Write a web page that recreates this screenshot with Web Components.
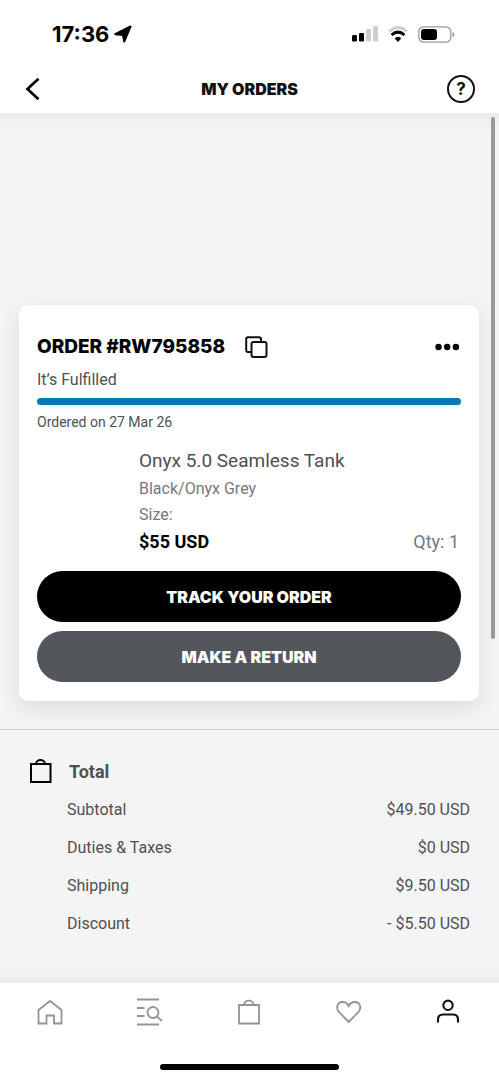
<!DOCTYPE html>
<html lang="en">
<head>
<meta charset="utf-8">
<meta name="viewport" content="width=device-width, initial-scale=1">
<title>My Orders</title>
<style>
  body { margin: 0; background: #fff; font-family: Roboto, "Liberation Sans", sans-serif; font-size: 16px; color: #4f5054; --display: Inter, "Liberation Sans", sans-serif; }
</style>
</head>
<body>
<orders-app></orders-app>
<script>
const define = (name, html) => {
  const template = document.createElement('template');
  template.innerHTML = html;
  customElements.define(name, class extends HTMLElement {
    constructor() {
      super();
      this.attachShadow({ mode: 'open' }).append(template.content.cloneNode(true));
    }
  });
};

define('status-bar', `
<style>
  :host { display: flex; justify-content: space-between; align-items: center; height: 64px; padding: 4px 44px 0 52px; box-sizing: border-box; color: #000; }
  .side { display: flex; align-items: center; }
  time { font: 700 22px/24px var(--display); }
  svg { display: block; }
  .left { gap: 5px; }
  .right { gap: 10px; }
</style>
<div class="side left">
  <time>17:36</time>
  <svg width="18" height="18" viewBox="0 0 18 18" aria-hidden="true"><path d="M16.500 1.500 10.200 16.500 9 10 1.200 9.200Z" fill="#000" stroke="#000" stroke-width="2" stroke-linejoin="round"/></svg>
</div>
<div class="side right">
  <svg width="26" height="16" viewBox="0 0 26 16" aria-hidden="true"><rect x="0" y="9" width="5" height="6.500" rx="1.200"/><rect x="7" y="7" width="5" height="8.500" rx="1.200"/><rect x="14" y="3" width="5" height="12.500" rx="1.200" fill="#cfcfcf"/><rect x="21" y="0" width="5" height="15.500" rx="1.200" fill="#cfcfcf"/></svg>
  <svg width="20" height="16" viewBox="0 0 20 16" fill="none" aria-hidden="true"><path d="M1 5.500Q10-2.500 19 5.500" stroke="#cfcfcf" stroke-width="3"/><path d="M3.600 9Q10 3.200 16.400 9" stroke="#000" stroke-width="3"/><path d="M6.600 12.300Q10 9 13.400 12.300L10 16Z" fill="#000"/></svg>
  <svg width="37" height="17" viewBox="0 0 37 17" aria-hidden="true"><rect x=".8" y=".8" width="32" height="15.400" rx="5" fill="#fff" stroke="#999" stroke-width="1.300"/><rect x="3" y="3" width="16" height="11" rx="3"/><path d="M34.500 6Q36.500 6.500 36.500 8.500T34.500 11Z" fill="#999"/></svg>
</div>`);

define('page-header', `
<style>
  :host { display: grid; grid-template-columns: 1fr auto 1fr; align-items: center; height: 49px; padding: 0 24px; }
  h1 { margin: 0; font: 900 16px/24px var(--display); color: #111; }
  button { appearance: none; border: 0; background: none; padding: 0; display: block; }
  button:last-of-type { justify-self: end; }
  svg { display: block; }
  .help { box-sizing: border-box; width: 28px; height: 28px; border: 2px solid #111; border-radius: 50%; font: 700 17px/24px var(--display); color: #111; text-align: center; }
</style>
<button aria-label="Back"><svg width="18" height="24" viewBox="0 0 18 24" fill="none" stroke="#000" stroke-width="2.700"><path d="M14.500 1.800 3.500 12 14.500 22.200"/></svg></button>
<h1><slot></slot></h1>
<button class="help" aria-label="Help">?</button>`);

define('pill-button', `
<style>
  :host { display: block; }
  button { display: block; width: 100%; height: 51px; padding: 0; border: 0; border-radius: 26px; background: var(--pill, #000); color: #fff; font: 900 16px/24px var(--display); }
</style>
<button><slot></slot></button>`);

define('order-card', `
<style>
  :host { display: block; margin: 0 20px 0 19px; padding: 25px 18px 19px; border-radius: 9px; background: #fff; box-shadow: 0 7px 22px rgba(0,0,0,.1); }
  header { display: flex; align-items: center; height: 34px; }
  h2 { margin: 0 20px 0 0; font: 800 19px/24px var(--display); color: #000; }
  button { appearance: none; border: 0; background: none; padding: 0; display: block; }
  svg { display: block; }
  .more { margin-left: auto; margin-right: 1px; }
  .status { line-height: 32px; margin-bottom: 2px; }
  progress { appearance: none; display: block; width: 100%; height: 7px; border: 0; border-radius: 4px; overflow: hidden; background: #0679b0; }
  progress::-webkit-progress-bar { background: #ddd; }
  progress::-webkit-progress-value { background: #0679b0; }
  .date { font-size: 14px; line-height: 34px; }
  .item { margin-left: 102px; padding: 7px 0 15px; }
  .name { font-size: 19px; line-height: 30px; }
  .muted { color: #77787c; line-height: 26px; }
  .price { display: flex; justify-content: space-between; font-size: 18px; line-height: 28px; color: #77787c; padding-right: 2px; }
  strong { color: #000; font-weight: 700; }
  .actions { display: grid; gap: 9px; }
  .second { --pill: #53565b; }
</style>
<header>
  <h2><slot name="number"></slot></h2>
  <button aria-label="Copy order number"><svg width="23" height="23" viewBox="0 0 23 23" fill="none" stroke="#111" stroke-width="2"><rect x="6.500" y="6" width="15" height="15" rx="2"/><path d="M6 16H3Q1.200 16 1.200 14V3Q1.200 1.200 3 1.200H14Q16 1.200 16 3V6"/></svg></button>
  <button class="more" aria-label="More options"><svg width="25" height="8" viewBox="0 0 25 8"><circle cx="3.500" cy="4" r="3.200"/><circle cx="12.200" cy="4" r="3.200"/><circle cx="20.900" cy="4" r="3.200"/></svg></button>
</header>
<div class="status"><slot name="status"></slot></div>
<progress value="1" max="1" aria-label="Order progress"></progress>
<div class="date"><slot name="date"></slot></div>
<div class="item">
  <div class="name"><slot name="name"></slot></div>
  <div class="muted"><slot name="colour"></slot></div>
  <div class="muted">Size:</div>
  <div class="price"><strong><slot name="price"></slot></strong><slot name="quantity"></slot></div>
</div>
<div class="actions">
  <pill-button>TRACK YOUR ORDER</pill-button>
  <pill-button class="second">MAKE A RETURN</pill-button>
</div>`);

define('order-total', `
<style>
  :host { display: block; margin-top: 28px; padding: 23px 29px 40px; border-top: 1px solid #d0d0d0; }
  .head { display: flex; align-items: center; gap: 17px; height: 38px; }
  h3 { margin: 0; font-size: 18px; line-height: 24px; font-weight: 700; }
  table { width: 100%; border-collapse: collapse; }
  th, td { height: 38px; padding: 0; font-weight: 400; line-height: 24px; }
  th { padding-left: 38px; text-align: left; }
  td { text-align: right; }
</style>
<div class="head">
  <svg width="23" height="26" viewBox="0 0 23 26" fill="none" stroke="#000" stroke-width="2" aria-hidden="true"><path d="M2 5H21.500V23H2Z"/><path d="M7 5C7 -.3 16 -.3 16 5"/></svg>
  <h3>Total</h3>
</div>
<table>
  <tr><th scope="row">Subtotal</th><td>$49.50 USD</td></tr>
  <tr><th scope="row">Duties &amp; Taxes</th><td>$0 USD</td></tr>
  <tr><th scope="row">Shipping</th><td>$9.50 USD</td></tr>
  <tr><th scope="row">Discount</th><td>- $5.50 USD</td></tr>
</table>`);

define('tab-bar', `
<style>
  :host { display: block; background: #fff; }
  nav { display: grid; grid-template-columns: repeat(5, 1fr); height: 58px; }
  a { display: grid; place-items: center; color: #939393; }
  a[aria-current] { color: #111; }
  svg { display: block; fill: none; stroke: currentColor; stroke-width: 1.800; }
  .home-indicator { width: 36%; height: 6px; margin: 23px auto 10px; border-radius: 3px; background: #000; }
</style>
<nav aria-label="Main">
  <a href="#home" aria-label="Home"><svg width="28" height="28" viewBox="0 0 28 28"><path d="M2.500 12 14 3 25.500 12V25.500H18V17.500H10.500V25.500H2.500Z"/></svg></a>
  <a href="#search" aria-label="Search"><svg width="28" height="28" viewBox="0 0 28 28"><path d="M1 1.500H23M1 10H8.500M1 18H8.500M1 26.500H23"/><circle cx="17" cy="14.500" r="5.500"/><path d="M21 18.500 26 23"/></svg></a>
  <a href="#bag" aria-label="Bag"><svg width="28" height="28" viewBox="0 0 28 28"><path d="M4 7H24V25.500H4Z"/><path d="M9 7C9 1.200 18.500 1.200 18.500 7"/></svg></a>
  <a href="#wishlist" aria-label="Wishlist"><svg width="28" height="28" viewBox="0 0 28 28"><path d="M13.700 24 3.800 13.800C.5 9.500 2.500 4 7.500 4Q11.800 4 13.700 8Q15.600 4 19.900 4C24.900 4 26.900 9.500 23.600 13.800Z"/></svg></a>
  <a href="#account" aria-label="Account" aria-current="page"><svg width="28" height="28" viewBox="0 0 28 28" style="stroke-width:2.100"><circle cx="13" cy="7.300" r="4.700"/><path d="M3 24.500V21.500Q3 16.500 8 16.500H18Q23 16.500 23 21.500V24.500"/></svg></a>
</nav>
<div class="home-indicator"></div>`);

define('orders-app', `
<style>
  :host { display: flex; flex-direction: column; min-height: 100vh; }
  main { flex: 1; position: relative; padding-top: 192px; background: linear-gradient(#ececec, #f4f4f4 18px, #f4f4f4 calc(100% - 18px), #ececec); }
  .thumb { position: absolute; top: 4px; right: 4px; width: 4px; height: 60%; border-radius: 2px; background: #999; }
</style>
<status-bar></status-bar>
<page-header>MY ORDERS</page-header>
<main>
  <order-card>
    <span slot="number">ORDER #RW795858</span>
    <span slot="status">It’s Fulfilled</span>
    <span slot="date">Ordered on 27 Mar 26</span>
    <span slot="name">Onyx 5.0 Seamless Tank</span>
    <span slot="colour">Black/Onyx Grey</span>
    <span slot="price">$55 USD</span>
    <span slot="quantity">Qty: 1</span>
  </order-card>
  <order-total></order-total>
  <div class="thumb"></div>
</main>
<tab-bar></tab-bar>`);
</script>
</body>
</html>
